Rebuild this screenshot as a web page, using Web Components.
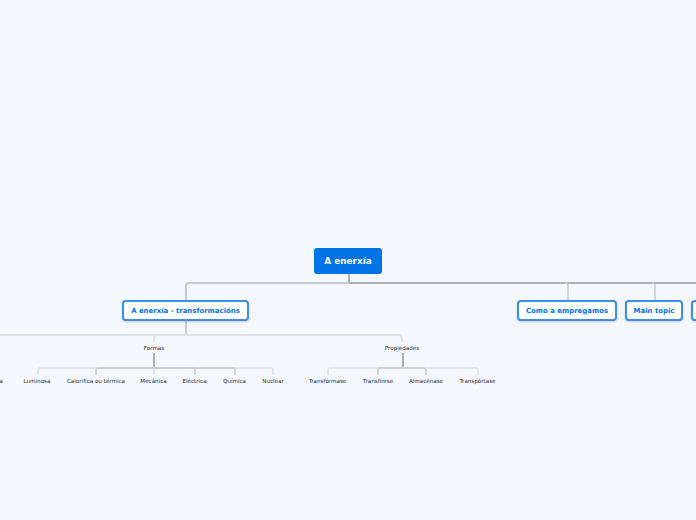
<!DOCTYPE html>
<html lang="gl"><head><meta charset="utf-8"><title>A enerxía</title>
<style>html,body{margin:0;padding:0;background:#f4f7fe;overflow:hidden}</style></head>
<body>
<mm-map>
  <mm-node kind="root" x="314" y="248" w="68" h="26">A enerxía</mm-node>
  <mm-node kind="main" x="122" y="300" w="127" h="21">A enerxía - transformacións</mm-node>
  <mm-node kind="main" x="517" y="300" w="100" h="21">Como a empregamos</mm-node>
  <mm-node kind="main" x="625" y="300" w="58" h="21">Main topic</mm-node>
  <mm-node kind="main" x="691" y="300" w="58" h="21"></mm-node>
  <mm-node kind="sub" x="124" y="342" w="60" h="12">Formas</mm-node>
  <mm-node kind="sub" x="372" y="342" w="60" h="12">Propiedades</mm-node>
  <mm-node kind="sub" x="-37" y="375" w="60" h="12">Sonora</mm-node>
  <mm-node kind="sub" x="7" y="375" w="60" h="12">Luminosa</mm-node>
  <mm-node kind="sub" x="56" y="375" w="80" h="12">Calorífica ou térmica</mm-node>
  <mm-node kind="sub" x="123.5" y="375" w="60" h="12">Mecánica</mm-node>
  <mm-node kind="sub" x="164.5" y="375" w="60" h="12">Eléctrica</mm-node>
  <mm-node kind="sub" x="204.5" y="375" w="60" h="12">Química</mm-node>
  <mm-node kind="sub" x="243" y="375" w="60" h="12">Nuclear</mm-node>
  <mm-node kind="sub" x="297.5" y="375" w="60" h="12">Transfórmase</mm-node>
  <mm-node kind="sub" x="348" y="375" w="60" h="12">Transfírese</mm-node>
  <mm-node kind="sub" x="396" y="375" w="60" h="12">Almacénase</mm-node>
  <mm-node kind="sub" x="447.5" y="375" w="60" h="12">Transpórtase</mm-node>
</mm-map>
<script>
class MmMap extends HTMLElement{
  constructor(){super();
    const s=this.attachShadow({mode:'open'});
    const L='#c8cad0',D='#aeb0b4',P='#dfe1e8';
    const e=(d,c,w)=>`<path d="${d}" fill="none" stroke="${c}" stroke-width="${w}"/>`;
    s.innerHTML=`<style>
      :host{display:block;position:relative;width:696px;height:520px;overflow:hidden;background:#f4f7fe;
        font-family:"DejaVu Sans",Verdana,sans-serif}
      svg{position:absolute;left:0;top:0}
    </style>
    <svg width="696" height="520" viewBox="0 0 696 520" aria-hidden="true">
      ${e('M349 283H189Q186 283 186 286V300',L,2)}
      ${e('M349 283H700',D,2)}
      ${e('M349 274V283',D,2)}
      ${e('M565 283Q568 283 568 286V300',L,1.5)}
      ${e('M652 283Q655 283 655 286V300',L,1.5)}
      ${e('M186 321V335',L,2)}
      ${e('M186 335H-5',P,2)}
      ${e('M186 335H399Q402 335 402 338V342',P,2)}
      ${e('M186 335H157Q154 335 154 338V342',P,1.5)}
      ${e('M154 353V368',D,2)}
      ${e('M154 368H40Q38 368 38 370V375',P,1.5)}
      ${e('M154 368H98Q96 368 96 370V375',L,1.5)}
      ${e('M154 368V375',P,1.5)}
      ${e('M154 368H271Q273 368 273 370V375',P,1.5)}
      ${e('M154 368H233Q235 368 235 370V375',L,1.5)}
      ${e('M154 368H193Q195 368 195 370V375',L,1.5)}
      ${e('M403 353V368',D,2)}
      ${e('M403 368H330Q328 368 328 370V375',P,1.5)}
      ${e('M403 368H380Q378 368 378 370V375',L,1.5)}
      ${e('M403 368H424Q426 368 426 370V375',L,1.5)}
      ${e('M426 368H476Q478 368 478 370V375',P,1.5)}
    </svg><slot></slot>`;
  }
}
const nodeTpl=document.createElement('template');
nodeTpl.innerHTML=`<style>
  :host{position:absolute;left:var(--x);top:var(--y);width:var(--w);height:var(--h);box-sizing:border-box;
    display:flex;align-items:center;justify-content:center;white-space:nowrap;font-weight:700}
  :host([kind=root]){background:#0073e6;color:#fff;border-radius:3px;font-size:8.9px;padding-bottom:1px}
  :host([kind=main]){background:#fff;color:#0073e6;border:2px solid #3b8eea;border-radius:4px;font-size:6.95px;
    box-shadow:0 1px 2px rgba(60,70,100,.25)}
  :host([kind=sub]){color:#2a2c34;font-weight:400;font-size:5.6px}
</style><slot></slot>`;
class MmNode extends HTMLElement{
  constructor(){super();this.attachShadow({mode:'open'}).appendChild(nodeTpl.content.cloneNode(true));}
  connectedCallback(){for(const k of['x','y','w','h'])this.style.setProperty('--'+k,this.getAttribute(k)+'px');}
}
customElements.define('mm-map',MmMap);
customElements.define('mm-node',MmNode);
</script>
</body></html>
